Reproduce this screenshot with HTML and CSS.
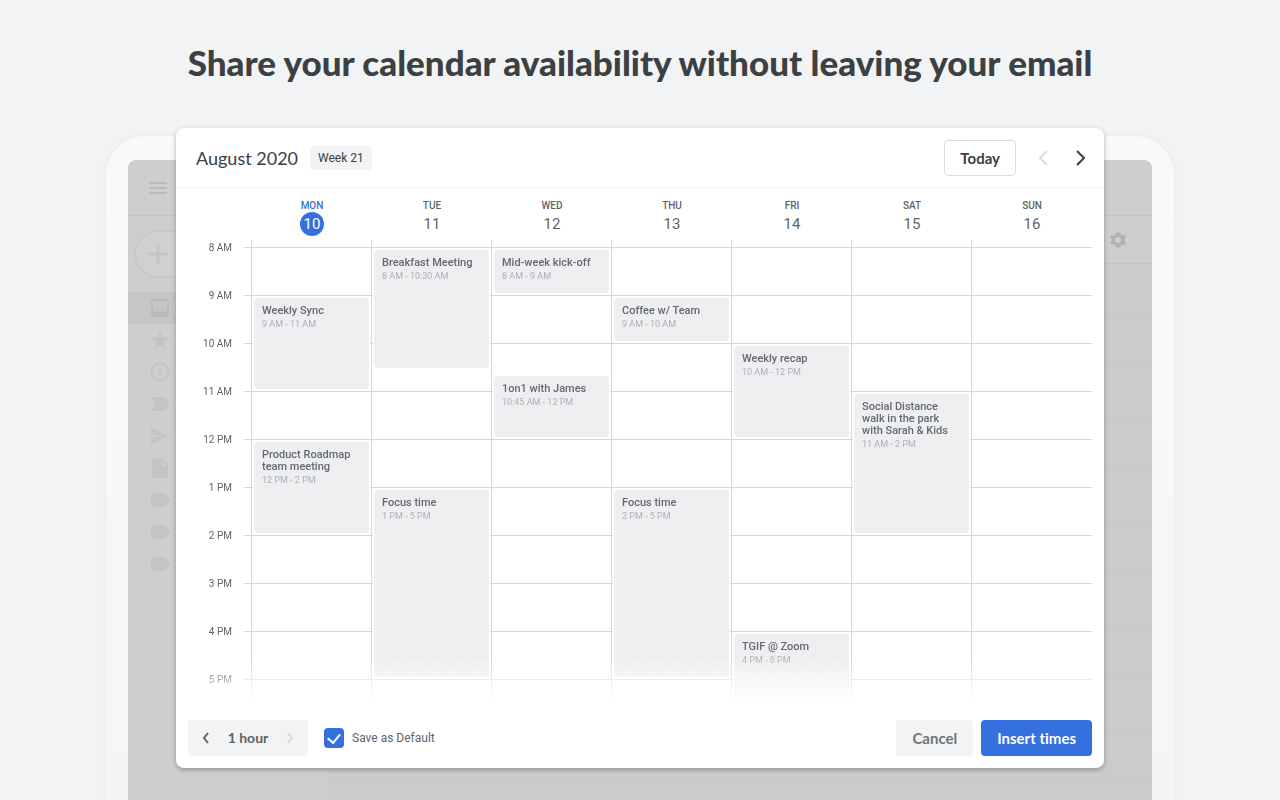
FILE: index.html
```html
<!DOCTYPE html>
<html lang="en">
<head>
    <meta charset="UTF-8">
    <meta name="viewport" content="width=device-width, initial-scale=1">
    <title>Calendar availability</title>
    <link rel="stylesheet" href="styles.css">
</head>
<body>
<h1 class="headline">Share your calendar availability without leaving your email</h1>
<div class="stage">
    <div class="device" aria-hidden="true">
        <div class="screen">
            <div class="topbar">
                <svg width="20" height="14" viewBox="0 0 20 14"><path d="M1 2h18M1 7h18M1 12h18" fill="none" stroke="currentColor" stroke-width="2"/></svg>
            </div>
            <div class="mail">
                <div class="nav">
                    <div class="compose">
                        <svg width="20" height="20" viewBox="0 0 20 20"><path d="M10 0v20M0 10h20" stroke="currentColor" stroke-width="3"/></svg>
                    </div>
                    <div class="nav-item active"><svg viewBox="0 0 20 20"><rect x="2" y="2" width="16" height="16" rx="2" fill="none" stroke="currentColor" stroke-width="2"/><path fill="none" stroke="currentColor" d="M8 5v7M12 5v7" opacity=".6"/><path fill="currentColor" d="M2 13h5q3 3 6 0h5v4H2z"/></svg></div>
                    <div class="nav-item"><svg viewBox="0 0 20 20"><path fill="currentColor" d="M10 1l2.600 6 6.400.600-4.800 4.300 1.400 6.400L10 15l-5.600 3.300 1.400-6.400L1 7.600 7.400 7z"/></svg></div>
                    <div class="nav-item"><svg viewBox="0 0 20 20"><circle cx="10" cy="10" r="8.500" fill="none" stroke="currentColor" stroke-width="2"/><path d="M10 5v6l4 2" fill="none" stroke="currentColor" stroke-width="1.500"/></svg></div>
                    <div class="nav-item"><svg viewBox="0 0 20 20"><path fill="currentColor" d="M1 3h11q3 0 4 2l3 5-3 5q-1 2-4 2H1l4-7z"/></svg></div>
                    <div class="nav-item"><svg viewBox="0 0 20 20"><path fill="currentColor" d="M1 2l18 8-18 8v-6l11-2L1 8z"/></svg></div>
                    <div class="nav-item"><svg viewBox="0 0 20 20"><path fill="currentColor" d="M3 0h9l6 6v14H2V1z"/><path fill="#cecece" d="M11 2v6h6z"/></svg></div>
                    <div class="nav-item"><svg viewBox="0 0 20 20"><path fill="currentColor" d="M3 3h11q2 0 3 2l3 5-3 5q-1 2-3 2H3q-2 0-2-2V5q0-2 2-2z"/></svg></div>
                    <div class="nav-item"><svg viewBox="0 0 20 20"><path fill="currentColor" d="M3 3h11q2 0 3 2l3 5-3 5q-1 2-3 2H3q-2 0-2-2V5q0-2 2-2z"/></svg></div>
                    <div class="nav-item"><svg viewBox="0 0 20 20"><path fill="currentColor" d="M3 3h11q2 0 3 2l3 5-3 5q-1 2-3 2H3q-2 0-2-2V5q0-2 2-2z"/></svg></div>
                </div>
                <div class="inbox">
                    <div class="toolbar">
                        <svg width="20" height="20" viewBox="0 0 24 24"><path fill="currentColor" fill-rule="evenodd" d="M19.400 13a7.500 7.500 0 0 0 0-2l2.100-1.600-2-3.500-2.500 1a7.500 7.500 0 0 0-1.700-1L14.900 3.200h-5.800L8.700 5.900a7.500 7.500 0 0 0-1.700 1l-2.500-1-2 3.500L4.600 11a7.500 7.500 0 0 0 0 2l-2.100 1.600 2 3.500 2.500-1a7.500 7.500 0 0 0 1.700 1l.4 2.700h5.800l.4-2.700a7.500 7.500 0 0 0 1.700-1l2.500 1 2-3.500zM12 15.700a3.700 3.700 0 1 1 0-7.400 3.700 3.700 0 0 1 0 7.400z"/></svg>
                    </div>
                    <div class="mail-rows"></div>
                </div>
            </div>
        </div>
    </div>

    <div class="dialog" role="dialog" aria-labelledby="month">
        <div class="dialog-header">
            <h2 id="month">August 2020</h2>
            <span class="week">Week 21</span>
            <button type="button" class="btn today">Today</button>
            <button type="button" class="icon-btn" aria-label="Previous week" disabled><svg width="10" height="16" viewBox="0 0 10 16"><path d="M8 1L1 8l7 7"/></svg></button>
            <button type="button" class="icon-btn" aria-label="Next week"><svg width="10" height="16" viewBox="0 0 10 16"><path d="M2 1l7 7-7 7"/></svg></button>
        </div>

        <div class="day-names">
            <div class="day-name current">MON<span>10</span></div>
            <div class="day-name">TUE<span>11</span></div>
            <div class="day-name">WED<span>12</span></div>
            <div class="day-name">THU<span>13</span></div>
            <div class="day-name">FRI<span>14</span></div>
            <div class="day-name">SAT<span>15</span></div>
            <div class="day-name">SUN<span>16</span></div>
        </div>

        <div class="schedule">
            <div class="hours">
                <div>8 AM</div>
                <div>9 AM</div>
                <div>10 AM</div>
                <div>11 AM</div>
                <div>12 PM</div>
                <div>1 PM</div>
                <div>2 PM</div>
                <div>3 PM</div>
                <div>4 PM</div>
                <div>5 PM</div>
            </div>
            <!-- 16 grid rows per hour, row 1 is 8 AM -->
            <div class="days">
                <div class="day">
                    <div class="event" style="grid-row: 17 / span 32"><b>Weekly Sync</b><small>9 AM - 11 AM</small></div>
                    <div class="event" style="grid-row: 65 / span 32"><b>Product Roadmap team meeting</b><small>12 PM - 2 PM</small></div>
                </div>
                <div class="day">
                    <div class="event" style="grid-row: 1 / span 41"><b>Breakfast Meeting</b><small>8 AM - 10:30 AM</small></div>
                    <div class="event" style="grid-row: 81 / span 64"><b>Focus time</b><small>1 PM - 5 PM</small></div>
                </div>
                <div class="day">
                    <div class="event" style="grid-row: 1 / span 16"><b>Mid-week kick-off</b><small>8 AM - 9 AM</small></div>
                    <div class="event" style="grid-row: 43 / span 22"><b>1on1 with James</b><small>10:45 AM - 12 PM</small></div>
                </div>
                <div class="day">
                    <div class="event" style="grid-row: 17 / span 16"><b>Coffee w/ Team</b><small>9 AM - 10 AM</small></div>
                    <div class="event" style="grid-row: 81 / span 64"><b>Focus time</b><small>2 PM - 5 PM</small></div>
                </div>
                <div class="day">
                    <div class="event" style="grid-row: 33 / span 32"><b>Weekly recap</b><small>10 AM - 12 PM</small></div>
                    <div class="event" style="grid-row: 129 / span 32"><b>TGIF @ Zoom</b><small>4 PM - 6 PM</small></div>
                </div>
                <div class="day">
                    <div class="event" style="grid-row: 49 / span 48"><b>Social Distance walk in the park with Sarah &amp; Kids</b><small>11 AM - 2 PM</small></div>
                </div>
                <div class="day"></div>
            </div>
        </div>

        <div class="dialog-footer">
            <div class="duration">
                <button type="button" aria-label="Shorter"><svg width="8" height="12" viewBox="0 0 8 12"><path d="M6 1L2 6l4 5"/></svg></button>
                <span>1 hour</span>
                <button type="button" aria-label="Longer" disabled><svg width="8" height="12" viewBox="0 0 8 12"><path d="M2 1l4 5-4 5"/></svg></button>
            </div>
            <input type="checkbox" id="save" checked>
            <label for="save">Save as Default</label>
            <button type="button" class="btn cancel">Cancel</button>
            <button type="button" class="btn insert">Insert times</button>
        </div>
    </div>
</div>
</body>
</html>
```

FILE: styles.css
```css
*{
    box-sizing: border-box;
    margin: 0;
    padding: 0;
}
body{
    display: flex;
    flex-direction: column;
    height: 100vh;
    overflow: hidden;
    background: #f1f3f4;
    color: #3c4043;
    font-family: Roboto, "Liberation Sans", sans-serif;
    font-variant-ligatures: none;
}
button{
    border: 0;
    background: none;
    font: inherit;
    color: inherit;
}
svg{
    display: block;
}
.headline{
    padding: 38px 16px 42px;
    font: 900 35px/48px Lato, "Liberation Sans", sans-serif;
    font-variant-ligatures: none;
    text-align: center;
    color: #3c4043;
}
.stage{
    flex: 1;
    display: grid;
    grid-template: 1fr / 1fr;
    width: 100%;
    max-width: 1068px;
    min-height: 0;
    margin: 0 auto;
}
.device, .dialog{
    grid-area: 1 / 1;
}

/* mail app behind the dialog */
.device{
    display: flex;
    margin-top: 8px;
    padding: 24px 22px 0;
    border-radius: 40px 40px 0 0;
    background: linear-gradient(#f9fafb, #f4f5f6);
    box-shadow: 0 0 8px rgba(60, 64, 67, 0.04);
}
.screen{
    flex: 1;
    display: flex;
    flex-direction: column;
    overflow: hidden;
    border-radius: 8px 8px 0 0;
    background: #cecece;
    color: #b9babb;
}
.topbar{
    display: flex;
    align-items: center;
    height: 56px;
    padding: 0 20px;
    border-bottom: 1px solid #c4c5c6;
}
.mail{
    flex: 1;
    display: flex;
}
.nav{
    width: 200px;
    color: #c3c4c6;
}
.compose{
    display: flex;
    align-items: center;
    height: 48px;
    margin: 14px 0 14px 6px;
    padding-left: 12px;
    border: 2px solid #c8c8c8;
    border-radius: 24px;
    background: #d0d0d0;
}
.nav-item{
    display: flex;
    align-items: center;
    height: 32px;
    padding-left: 22px;
}
.nav-item svg{
    width: 20px;
    height: 20px;
}
.nav-item.active{
    background: #c5c6c7;
    color: #b9babb;
}
.inbox{
    flex: 1;
    display: flex;
    flex-direction: column;
}
.toolbar{
    display: flex;
    align-items: center;
    justify-content: flex-end;
    height: 48px;
    padding-right: 24px;
    border-bottom: 1px solid #c4c5c6;
    color: #b0b1b2;
}
.mail-rows{
    flex: 1;
    background: repeating-linear-gradient(#cacbcd 0 51px, #c7c8ca 51px 52px);
}

/* dialog */
.dialog{
    z-index: 1;
    align-self: start;
    justify-self: center;
    width: 87%;
    max-width: 928px;
    border-radius: 8px;
    background: #fff;
    box-shadow: 0 2px 5px rgba(60, 64, 67, 0.4);
}
.dialog-header{
    display: flex;
    align-items: center;
    gap: 12px;
    height: 60px;
    padding: 0 12px 0 20px;
    border-bottom: 1px solid #f1f3f4;
}
.dialog-header h2{
    font: 400 18px/24px Lato, "Liberation Sans", sans-serif;
}
.week{
    padding: 0 8px;
    border-radius: 4px;
    background: #f1f3f4;
    font-size: 12px;
    line-height: 24px;
}
.btn{
    height: 36px;
    padding: 0 16px;
    border-radius: 4px;
    font: 700 15px/20px Lato, "Liberation Sans", sans-serif;
    font-variant-ligatures: none;
}
.today{
    margin-left: auto;
    margin-right: 4px;
    padding: 0 15px;
    border: 1px solid #dadce0;
}
.icon-btn, .duration button{
    display: flex;
    align-items: center;
    justify-content: center;
}
.icon-btn{
    width: 24px;
    height: 24px;
}
.icon-btn path, .duration path{
    fill: none;
    stroke: currentColor;
    stroke-width: 2;
}
.icon-btn:disabled, .duration button:disabled{
    color: #dadce0;
}
.day-names{
    display: grid;
    grid-template-columns: repeat(7, 1fr);
    height: 52px;
    padding: 12px 12px 0 76px;
}
.day-name{
    display: flex;
    flex-direction: column;
    align-items: center;
    font-size: 10px;
    font-weight: 500;
    line-height: 12px;
    color: #5f6368;
}
.day-name span{
    width: 24px;
    border-radius: 12px;
    font-size: 15px;
    font-weight: 400;
    line-height: 24px;
    text-align: center;
}
.day-name.current{
    color: #3471d8;
}
.day-name.current span{
    background: #3471de;
    color: #fff;
}
.schedule{
    display: flex;
    height: 464px;
    padding-right: 12px;
    overflow: hidden;
    -webkit-mask-image: linear-gradient(#000 416px, transparent);
    mask-image: linear-gradient(#000 416px, transparent);
}
.hours{
    width: 76px;
    padding-right: 19px;
    border-right: 1px solid #d5d8db;
    background: repeating-linear-gradient(#d5d8db 0 1px, transparent 1px 48px) right 7px / 7px 100% no-repeat;
    font-size: 10px;
    line-height: 16px;
    text-align: right;
    color: #5f6368;
}
.hours div{
    height: 48px;
}
.days{
    flex: 1;
    display: grid;
    grid-template-columns: repeat(7, 1fr);
    background: repeating-linear-gradient(#d5d8db 0 1px, transparent 1px 48px) 0 7px no-repeat;
}
.day{
    display: grid;
    grid-auto-rows: 3px;
    height: 464px;
    padding: 10px 2px 0;
    border-right: 1px solid #d5d8db;
}
.day:last-child{
    border-right: 0;
}
.event{
    margin-bottom: 5px;
    padding: 7px 8px;
    border-radius: 4px;
    background: repeating-linear-gradient(135deg, #edeff1 0 7px, #e9ebee 8px, #edeff1 9px);
    box-shadow: 0 0 0 1px #fff;
    line-height: 12px;
}
.event b{
    display: block;
    font-size: 11px;
    font-weight: 500;
    color: #66696d;
}
.event small{
    display: block;
    padding-top: 1px;
    font-size: 9px;
    color: #aeb1b5;
}
.dialog-footer{
    display: flex;
    align-items: center;
    gap: 8px;
    padding: 16px 12px 12px;
}
.duration{
    display: flex;
    align-items: center;
    justify-content: space-between;
    width: 120px;
    height: 36px;
    margin-right: 8px;
    border-radius: 4px;
    background: #f1f3f4;
    font: 700 14px/20px Lato, "Liberation Sans", sans-serif;
    color: #5f6368;
}
.duration button{
    width: 36px;
    height: 36px;
}
.dialog-footer input{
    display: grid;
    place-items: center;
    width: 20px;
    height: 20px;
    border-radius: 4px;
    background: #3471de;
    appearance: none;
}
.dialog-footer input:checked::after{
    content: "";
    width: 6px;
    height: 10px;
    margin-bottom: 3px;
    border: solid #fff;
    border-width: 0 2px 2px 0;
    transform: rotate(40deg);
}
.dialog-footer label{
    font-size: 12px;
    line-height: 16px;
    color: #5f6368;
}
.cancel{
    margin-left: auto;
    background: #f1f3f4;
    color: #70757a;
}
.insert{
    background: #3471de;
    color: #fff;
}
```
